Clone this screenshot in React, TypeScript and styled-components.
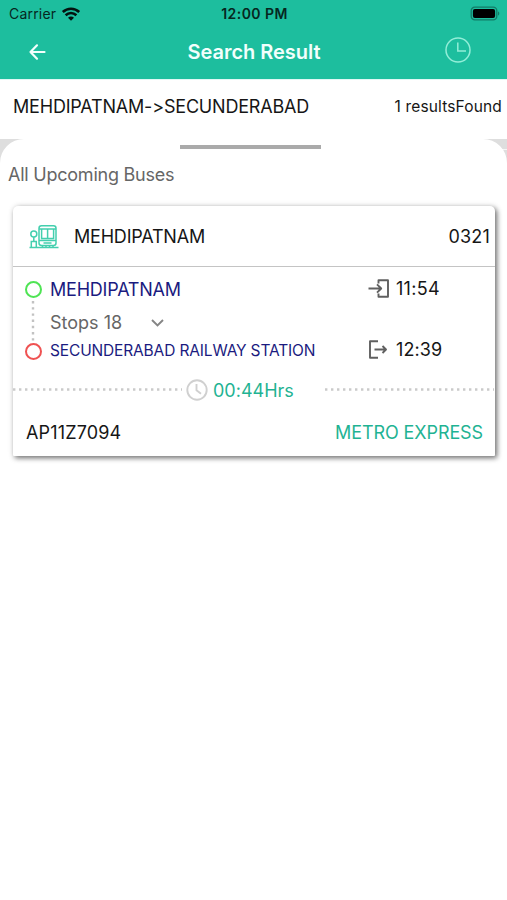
import React from "react";
import styled, { createGlobalStyle } from "styled-components";

const GlobalStyle = createGlobalStyle`
  *, *::before, *::after { box-sizing: border-box; }
  body {
    margin: 0;
    background: #fff;
    font-family: Inter, "Liberation Sans", sans-serif;
    font-feature-settings: "calt" 0;
    color: #161616;
  }
`;

const Screen = styled.div`
  width: 507px;
  height: 900px;
  overflow: hidden;
  display: flex;
  flex-direction: column;
  background: #fff;
`;

const Header = styled.header`
  height: 79px;
  flex: none;
  background: #1dbe9e;
`;

const StatusBar = styled.div`
  display: grid;
  grid-template-columns: 1fr auto 1fr;
  align-items: center;
  height: 27px;
  padding: 0 7px 0 9px;
  color: #06271f;
`;

const Carrier = styled.div`
  display: flex;
  align-items: center;
  gap: 6px;
`;

const BatterySlot = styled.div`
  display: flex;
  justify-content: flex-end;
`;

const NavBar = styled.div`
  display: grid;
  grid-template-columns: 60px 1fr 60px;
  align-items: center;
  height: 50px;
  color: #f2fffc;
`;

const NavButton = styled.button<{ $side: "left" | "right" }>`
  display: flex;
  justify-content: ${(p) => (p.$side === "left" ? "flex-start" : "flex-end")};
  padding: ${(p) => (p.$side === "left" ? "0 0 0 28px" : "0 36px 4px 0")};
  border: 0;
  background: none;
  color: inherit;
`;

const Label = styled.span<{
  $size: number;
  $weight?: number;
  $spacing?: number;
  $color?: string;
}>`
  font-size: ${(p) => p.$size}px;
  font-weight: ${(p) => p.$weight ?? 400};
  letter-spacing: ${(p) => p.$spacing ?? 0}px;
  color: ${(p) => p.$color ?? "inherit"};
  line-height: 24px;
  white-space: nowrap;
`;

const Title = styled.h1`
  margin: 0;
  padding-left: 1px;
  font-size: 20px;
  font-weight: 600;
  letter-spacing: -0.03px;
  line-height: 24px;
  text-align: center;
`;

const Summary = styled.section`
  display: flex;
  justify-content: space-between;
  align-items: center;
  height: 60px;
  flex: none;
  padding: 0 5px 5px 13px;
  border-top: 1px solid #dff8f5;
`;

const SheetBackdrop = styled.main`
  flex: 1;
  background:
    linear-gradient(#f6f6f6, #f6f6f6) right 10px / 8px 1px no-repeat,
    linear-gradient(#dedede 0 24px, #fff 24px);
`;

const Sheet = styled.div`
  height: 100%;
  padding: 6px 12px 0 13px;
  border-radius: 24px 24px 0 0;
  background: #fff;
`;

const Handle = styled.div`
  width: 141px;
  height: 4px;
  margin-left: 167px;
  background: #aaa;
`;

const SectionTitle = styled.div`
  display: flex;
  align-items: center;
  height: 24px;
  margin: 14px 0 19px -5px;
`;

const Card = styled.article`
  height: 250px;
  border-radius: 5px 5px 1px 1px;
  background: #fff;
  box-shadow: 2px 2px 5px rgba(0, 0, 0, 0.5), 1px 1px 7px rgba(0, 0, 0, 0.14);
`;

const CardHeader = styled.div`
  display: flex;
  align-items: center;
  height: 61px;
  padding: 1px 5px 0 16px;
  border-bottom: 1px solid #c4c4c4;
`;

const RouteName = styled.div`
  flex: 1;
  padding-left: 15px;
`;

const Journey = styled.div`
  display: grid;
  grid-template-columns: 16px 1fr 127px;
  height: 101px;
  padding: 0 0 0 12px;
`;

const Timeline = styled.div`
  display: flex;
  flex-direction: column;
  align-items: center;
  padding-top: 14px;
`;

const StopDot = styled.span<{ $color: string }>`
  width: 17px;
  height: 17px;
  flex: none;
  border: 2px solid ${(p) => p.$color};
  border-radius: 50%;
`;

const StopList = styled.div`
  display: flex;
  flex-direction: column;
  padding: 10px 0 0 9px;
`;

const StopRow = styled.div<{ $height: number }>`
  display: flex;
  align-items: center;
  height: ${(p) => p.$height}px;
`;

const StopCount = styled.div`
  width: 101px;
`;

const Times = styled.div`
  display: flex;
  flex-direction: column;
  gap: 37px;
  padding-top: 10px;
`;

const Time = styled.div`
  display: flex;
  align-items: center;
  gap: 6px;
  height: 24px;
`;

const DurationRow = styled.div`
  display: grid;
  grid-template-columns: 170px 1fr 170px;
  align-items: center;
  height: 44px;
`;

const Duration = styled.div`
  display: flex;
  align-items: center;
  gap: 5px;
  padding: 1px 0 0 3px;
`;

const CardFooter = styled.div`
  display: flex;
  justify-content: space-between;
  align-items: center;
  height: 42px;
  padding: 0 12px 0 13px;
`;

const Glyph = styled.svg`
  display: block;
  flex: none;
  overflow: visible;
`;

const WifiIcon = () => (
  <Glyph width="18" height="14" viewBox="0 0 18 14" fill="none" stroke="#03130f" strokeWidth="2.6">
    <path d="M.8 5C5.500.6 12.500.6 17.200 5" />
    <path d="M3.600 8.300c3.200-2.900 7.600-2.900 10.800 0" />
    <path d="M6 10.700c1.700-1.500 4.300-1.500 6 0L9 13.700Z" fill="#03130f" stroke="none" />
  </Glyph>
);

const BatteryIcon = () => (
  <Glyph width="29" height="14" viewBox="0 0 29 14" fill="none">
    <rect x="0.2" y="0.2" width="25.6" height="12.6" rx="3.6" stroke="#127c67" strokeWidth="1.3" />
    <rect x="1.9" y="1.9" width="22.2" height="9.2" rx="2" fill="#000" />
    <path d="M27 4.500c1.700.5 1.700 3.500 0 4Z" fill="#127c67" />
  </Glyph>
);

const BackIcon = () => (
  <Glyph
    width="18"
    height="16"
    viewBox="0 0 18 16"
    fill="none"
    stroke="#f2fffc"
    strokeWidth="2.2"
    strokeLinecap="round"
    strokeLinejoin="round"
  >
    <path d="M16.500 8H2.500M9 1.300 2.500 8 9 14.700" />
  </Glyph>
);

const HistoryIcon = () => (
  <Glyph width="26" height="26" viewBox="0 0 26 26" fill="none" stroke="#92eed8" strokeWidth="1.5">
    <circle cx="13" cy="13" r="12" />
    <path d="M12.800 5.500V14H21" />
  </Glyph>
);

const BusStopIcon = () => (
  <Glyph width="30" height="24" viewBox="0 0 30 24" fill="none" stroke="#43cfae" strokeWidth="1.5">
    <rect x="10" y=".8" width="17" height="19.700" rx="2.500" />
    <path d="M10 3.900H27M12.600 4.200v9.300h12V4.200M18.600 4.200v9.300M10 15.500H27M14.500 18h8" />
    <circle cx="4.800" cy="9" r="3" />
    <path d="M4.800 12v4M2.300 22v-5.500h5V22M.500 22.400h29M13.500 20.500v2M17 20.500v2M20.500 20.500v2M24 20.500v2" />
  </Glyph>
);

const VerticalDots = () => (
  <Glyph width="3" height="45" viewBox="0 0 3 45" fill="none" stroke="#c2c2c2" strokeWidth="2.4">
    <path d="M1 3V43" strokeDasharray="2.400 3.800" />
  </Glyph>
);

const DotLine = ({ length }: { length: number }) => (
  <Glyph width={length} height="3" fill="none" stroke="#cacaca" strokeWidth="2.4">
    <path d={`M0 .5H${length}`} strokeDasharray="2.400 3.600" />
  </Glyph>
);

const ChevronIcon = () => (
  <Glyph width="13" height="8" viewBox="0 0 13 8" fill="none" stroke="#858585" strokeWidth="1.9">
    <path d="m1 1 5.500 5.500L12 1" />
  </Glyph>
);

const EnterIcon = () => (
  <Glyph width="22" height="20" viewBox="0 0 22 20" fill="none" stroke="#606060" strokeWidth="1.9" strokeLinejoin="round">
    <path d="M10.500 4.500V1.200H20v16.600H10.500V14.500M.5 9.500H13M9 5.300 13.200 9.500 9 13.700" />
  </Glyph>
);

const ExitIcon = () => (
  <Glyph width="22" height="20" viewBox="0 0 22 20" fill="none" stroke="#606060" strokeWidth="1.9" strokeLinejoin="round">
    <path d="M10 1.200H2v16.600h8M6.500 9.500H18M14.500 6 18 9.500 14.500 13" />
  </Glyph>
);

const ClockIcon = () => (
  <Glyph width="22" height="22" viewBox="0 0 22 22" fill="none" stroke="#d0d0d0" strokeWidth="1.9">
    <circle cx="11" cy="10" r="9.700" />
    <path d="M10.500 4v6.200l4.500 3.600" />
  </Glyph>
);

export default function App() {
  return (
    <>
      <GlobalStyle />
      <Screen>
        <Header>
          <StatusBar>
            <Carrier>
              <Label $size={14} $spacing={0.2}>Carrier</Label>
              <WifiIcon />
            </Carrier>
            <Label $size={14} $weight={600} $spacing={0.45}>12:00 PM</Label>
            <BatterySlot>
              <BatteryIcon />
            </BatterySlot>
          </StatusBar>
          <NavBar>
            <NavButton $side="left" aria-label="Back">
              <BackIcon />
            </NavButton>
            <Title>Search Result</Title>
            <NavButton $side="right" aria-label="History">
              <HistoryIcon />
            </NavButton>
          </NavBar>
        </Header>
        <Summary>
          <Label $size={18} $spacing={-0.19}>MEHDIPATNAM-&gt;SECUNDERABAD</Label>
          <Label $size={15.5} $spacing={0.15}>1 resultsFound</Label>
        </Summary>
        <SheetBackdrop>
          <Sheet>
            <Handle />
            <SectionTitle>
              <Label $size={18} $spacing={-0.23} $color="#666">All Upcoming Buses</Label>
            </SectionTitle>
            <Card>
              <CardHeader>
                <BusStopIcon />
                <RouteName>
                  <Label $size={18} $spacing={-0.2}>MEHDIPATNAM</Label>
                </RouteName>
                <Label $size={18} $spacing={0.2}>0321</Label>
              </CardHeader>
              <Journey>
                <Timeline>
                  <StopDot $color="#4fe454" />
                  <VerticalDots />
                  <StopDot $color="#ef5252" />
                </Timeline>
                <StopList>
                  <StopRow $height={25}>
                    <Label $size={18} $spacing={-0.22} $color="#1b1b80">MEHDIPATNAM</Label>
                  </StopRow>
                  <StopRow $height={42}>
                    <StopCount>
                      <Label $size={18} $color="#666">Stops 18</Label>
                    </StopCount>
                    <ChevronIcon />
                  </StopRow>
                  <StopRow $height={14}>
                    <Label $size={15.5} $spacing={-0.15} $color="#1b1b80">
                      SECUNDERABAD RAILWAY STATION
                    </Label>
                  </StopRow>
                </StopList>
                <Times>
                  <Time>
                    <EnterIcon />
                    <Label $size={18} $spacing={0.3}>11:54</Label>
                  </Time>
                  <Time>
                    <ExitIcon />
                    <Label $size={18} $spacing={0.1}>12:39</Label>
                  </Time>
                </Times>
              </Journey>
              <DurationRow>
                <DotLine length={169} />
                <Duration>
                  <ClockIcon />
                  <Label $size={18} $color="#1fb393">00:44Hrs</Label>
                </Duration>
                <DotLine length={169} />
              </DurationRow>
              <CardFooter>
                <Label $size={18} $spacing={0.15}>AP11Z7094</Label>
                <Label $size={18} $spacing={-0.1} $color="#1fb393">METRO EXPRESS</Label>
              </CardFooter>
            </Card>
          </Sheet>
        </SheetBackdrop>
      </Screen>
    </>
  );
}
